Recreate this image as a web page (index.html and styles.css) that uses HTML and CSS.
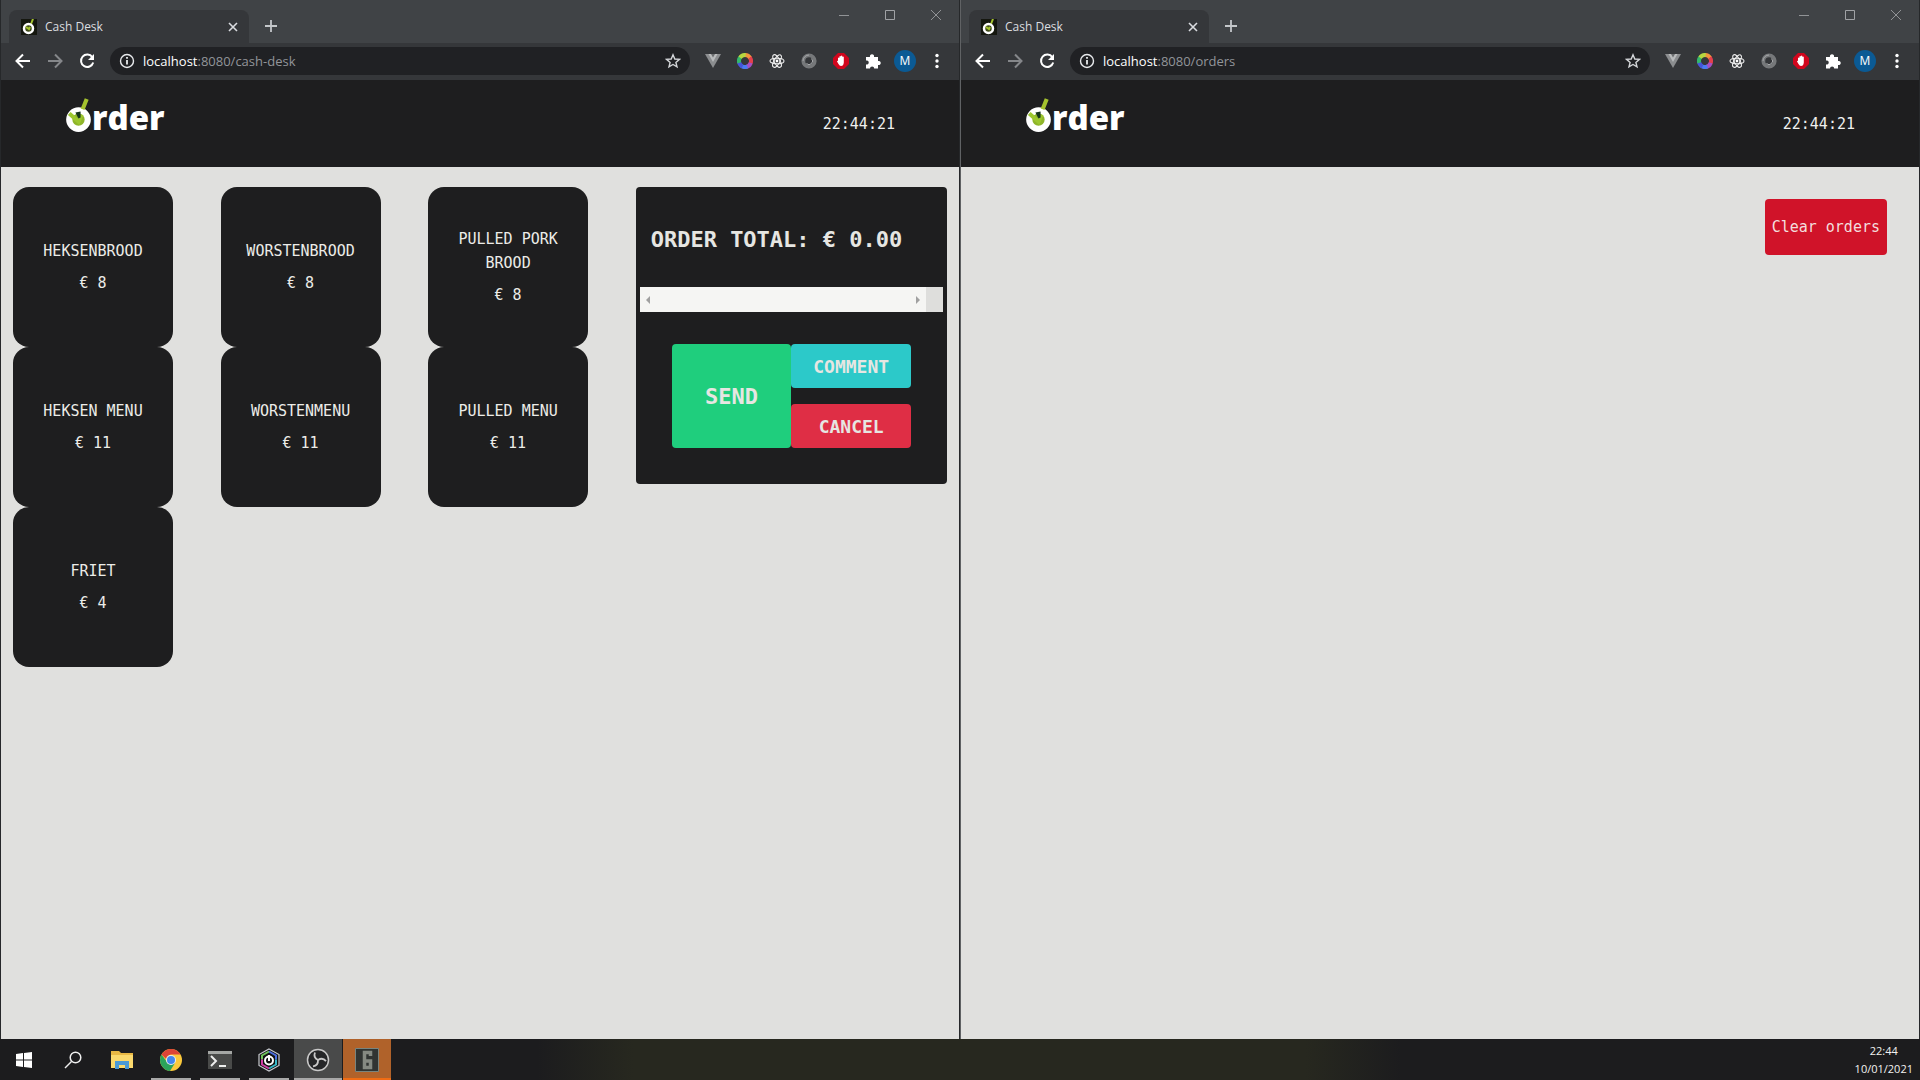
FILE: index.html
```html
<!DOCTYPE html>
<html lang="en">
<head>
<meta charset="utf-8">
<title>Cash Desk</title>
<link rel="stylesheet" href="styles.css">
</head>
<body>
<svg class="sprite" aria-hidden="true">
  <symbol id="favicon" viewBox="0 0 16 16"><rect width="16" height="16" fill="#15170f"/><path d="M10 5 12 0" stroke="#a4c22e" stroke-width="2"/><circle cx="7.500" cy="9.500" r="4.500" fill="#3f4a1c" stroke="#fff" stroke-width="2.500"/><path d="M5 8l3 2 1-2" stroke="#a4c22e" stroke-width="2" fill="none"/></symbol>
  <symbol id="close" viewBox="0 0 16 16"><path d="M4 4l8 8M12 4l-8 8" stroke="#dadce0" stroke-width="1.600"/></symbol>
  <symbol id="plus" viewBox="0 0 16 16"><path d="M8 2v12M2 8h12" stroke="#c4c7ca" stroke-width="1.800"/></symbol>
  <symbol id="win-min" viewBox="0 0 12 12"><path d="M1 6.500h10" stroke="#919396"/></symbol>
  <symbol id="win-max" viewBox="0 0 12 12"><path d="M1.500 1.500h9v9h-9z" stroke="#a0a2a5" fill="none"/></symbol>
  <symbol id="win-close" viewBox="0 0 12 12"><path d="M1 1l10 10M11 1L1 11" stroke="#919396"/></symbol>
  <symbol id="back" viewBox="0 0 16 16"><path d="M15 8H2M8 1.500L1.500 8 8 14.500" stroke="currentColor" stroke-width="2" fill="none"/></symbol>
  <symbol id="reload" viewBox="0 0 16 16"><path d="M13.300 4.200A6.200 6.200 0 1 0 14.200 9.500" stroke="#fff" stroke-width="2" fill="none"/><path d="M15 1v6H9z" fill="#fff"/></symbol>
  <symbol id="info" viewBox="0 0 16 16"><circle cx="8" cy="8" r="6.500" stroke="#e8eaed" stroke-width="1.400" fill="none"/><path d="M8 7v4.500M8 4v1.800" stroke="#e8eaed" stroke-width="1.800"/></symbol>
  <symbol id="star" viewBox="0 0 16 16"><path d="M8 1.800l1.800 4.200 4.600.4-3.500 3 1.100 4.500L8 11.500l-4 2.400 1.100-4.500-3.500-3 4.600-.4z" stroke="#d4d6d9" stroke-width="1.400" fill="none"/></symbol>
  <symbol id="vue" viewBox="0 0 16 16"><path d="M0 1h16L8 15z" fill="#8b8d8f"/><path d="M3.500 1h9L8 9z" fill="#b9bbbc"/><path d="M6 1h4L8 4.500z" fill="#6c6e70"/></symbol>
  <symbol id="wheel" viewBox="0 0 16 16"><g fill="none" stroke-width="4" stroke-dasharray="6.280 31.400"><g transform="rotate(-90 8 8)"><circle cx="8" cy="8" r="6" stroke="#f2953c"/></g><g transform="rotate(-36 8 8)"><circle cx="8" cy="8" r="6" stroke="#e3404d"/></g><g transform="rotate(18 8 8)"><circle cx="8" cy="8" r="6" stroke="#a54fc4"/></g><g transform="rotate(66 8 8)"><circle cx="8" cy="8" r="6" stroke="#4b7bf2"/></g><g transform="rotate(114 8 8)"><circle cx="8" cy="8" r="6" stroke="#4655d8"/></g><g transform="rotate(162 8 8)"><circle cx="8" cy="8" r="6" stroke="#34b86b"/></g><g transform="rotate(214 8 8)"><circle cx="8" cy="8" r="6" stroke="#b6d63f"/></g></g></symbol>
  <symbol id="react" viewBox="0 0 16 16"><g fill="none" stroke="#eee" stroke-width="1.100"><ellipse cx="8" cy="8" rx="7" ry="2.800"/><ellipse cx="8" cy="8" rx="7" ry="2.800" transform="rotate(60 8 8)"/><ellipse cx="8" cy="8" rx="7" ry="2.800" transform="rotate(120 8 8)"/></g><circle cx="8" cy="8" r="1.400" fill="#fff"/></symbol>
  <symbol id="ring" viewBox="0 0 16 16"><circle cx="8" cy="8" r="5.700" fill="none" stroke="#76787a" stroke-width="3.800"/><path d="M10.500 5.500a3.500 3.500 0 0 1-5 5M2 8a6 6 0 0 1 6-6" stroke="#a5a7a9" fill="none"/></symbol>
  <symbol id="block" viewBox="0 0 16 16"><path d="M5 0h6l5 5v6l-5 5H5l-5-5V5z" fill="#d1061d"/><path d="M5 8V5q.8-1 1.400 0V3.500q.8-1 1.500 0V3q.8-1 1.500 0v1q.8-1 1.400 0V9.500Q10.500 13 8 13 6.500 13 5.500 11L4 8.500q.2-1 1-.5z" fill="#fff"/></symbol>
  <symbol id="puzzle" viewBox="0 0 16 16"><path d="M1 4h4a2.100 2.100 0 1 1 4 0h4v4a2.100 2.100 0 1 1 0 4v3.500H9.200a2.100 2.100 0 1 0-4.200 0H1v-4a2.100 2.100 0 1 0 0-4z" fill="#fff"/></symbol>
  <symbol id="dots" viewBox="0 0 16 16"><g fill="#fff"><circle cx="8" cy="2.500" r="1.700"/><circle cx="8" cy="8" r="1.700"/><circle cx="8" cy="13.500" r="1.700"/></g></symbol>
  <symbol id="logo-mark" viewBox="0 0 24 34"><circle cx="12" cy="21" r="9" fill="#8fb52b" stroke="#fff" stroke-width="6"/><path d="M16 11L20 1" stroke="#a4c22e" stroke-width="4"/><path d="M3 15l9 8 3-7" stroke="#9cc62f" stroke-width="4" fill="none"/><path d="M9 14l5-1v6l-2 1z" fill="#14341c"/></symbol>
</svg>

<div class="desktop">
  <div class="windows">
    <section class="window">
      <div class="tab-strip">
        <div class="tab"><svg class="icon"><use href="#favicon"/></svg><span class="tab-title">Cash Desk</span><button class="plain" aria-label="Close tab"><svg class="icon"><use href="#close"/></svg></button></div>
        <button class="plain new-tab" aria-label="New tab"><svg class="icon"><use href="#plus"/></svg></button>
        <div class="window-controls">
          <button class="plain" aria-label="Minimize"><svg><use href="#win-min"/></svg></button>
          <button class="plain" aria-label="Maximize"><svg><use href="#win-max"/></svg></button>
          <button class="plain" aria-label="Close"><svg><use href="#win-close"/></svg></button>
        </div>
      </div>
      <div class="toolbar">
        <div class="nav">
          <button class="plain" aria-label="Back"><svg class="icon"><use href="#back"/></svg></button>
          <button class="plain forward" aria-label="Forward"><svg class="icon"><use href="#back"/></svg></button>
          <button class="plain" aria-label="Reload"><svg class="icon"><use href="#reload"/></svg></button>
        </div>
        <div class="address"><svg class="icon"><use href="#info"/></svg><a class="url" href="#"><b>localhost</b>:8080/cash-desk</a><button class="plain" aria-label="Bookmark"><svg class="icon"><use href="#star"/></svg></button></div>
        <div class="extensions">
          <svg class="icon"><use href="#vue"/></svg><svg class="icon"><use href="#wheel"/></svg><svg class="icon"><use href="#react"/></svg><svg class="icon"><use href="#ring"/></svg><svg class="icon"><use href="#block"/></svg><svg class="icon"><use href="#puzzle"/></svg>
        </div>
        <button class="avatar">M</button>
        <button class="plain" aria-label="Menu"><svg class="icon"><use href="#dots"/></svg></button>
      </div>
      <header class="app-header">
        <a class="logo" href="#" aria-label="Order"><svg><use href="#logo-mark"/></svg><span>rder</span></a>
        <time>22:44:21</time>
      </header>
      <main class="page cash-desk">
        <div class="products">
          <button class="product"><span>HEKSENBROOD</span><span>€ 8</span></button>
          <button class="product"><span>WORSTENBROOD</span><span>€ 8</span></button>
          <button class="product"><span>PULLED PORK BROOD</span><span>€ 8</span></button>
          <button class="product"><span>HEKSEN MENU</span><span>€ 11</span></button>
          <button class="product"><span>WORSTENMENU</span><span>€ 11</span></button>
          <button class="product"><span>PULLED MENU</span><span>€ 11</span></button>
          <button class="product"><span>FRIET</span><span>€ 4</span></button>
        </div>
        <aside class="order">
          <h1>ORDER TOTAL: € 0.00</h1>
          <div class="order-list"><div class="track"><i class="arrow left"></i><i class="arrow right"></i></div><div class="corner"></div></div>
          <div class="actions">
            <button class="send">SEND</button>
            <button class="comment">COMMENT</button>
            <button class="cancel">CANCEL</button>
          </div>
        </aside>
      </main>
    </section>

    <section class="window">
      <div class="tab-strip">
        <div class="tab"><svg class="icon"><use href="#favicon"/></svg><span class="tab-title">Cash Desk</span><button class="plain" aria-label="Close tab"><svg class="icon"><use href="#close"/></svg></button></div>
        <button class="plain new-tab" aria-label="New tab"><svg class="icon"><use href="#plus"/></svg></button>
        <div class="window-controls">
          <button class="plain" aria-label="Minimize"><svg><use href="#win-min"/></svg></button>
          <button class="plain" aria-label="Maximize"><svg><use href="#win-max"/></svg></button>
          <button class="plain" aria-label="Close"><svg><use href="#win-close"/></svg></button>
        </div>
      </div>
      <div class="toolbar">
        <div class="nav">
          <button class="plain" aria-label="Back"><svg class="icon"><use href="#back"/></svg></button>
          <button class="plain forward" aria-label="Forward"><svg class="icon"><use href="#back"/></svg></button>
          <button class="plain" aria-label="Reload"><svg class="icon"><use href="#reload"/></svg></button>
        </div>
        <div class="address"><svg class="icon"><use href="#info"/></svg><a class="url" href="#"><b>localhost</b>:8080/orders</a><button class="plain" aria-label="Bookmark"><svg class="icon"><use href="#star"/></svg></button></div>
        <div class="extensions">
          <svg class="icon"><use href="#vue"/></svg><svg class="icon"><use href="#wheel"/></svg><svg class="icon"><use href="#react"/></svg><svg class="icon"><use href="#ring"/></svg><svg class="icon"><use href="#block"/></svg><svg class="icon"><use href="#puzzle"/></svg>
        </div>
        <button class="avatar">M</button>
        <button class="plain" aria-label="Menu"><svg class="icon"><use href="#dots"/></svg></button>
      </div>
      <header class="app-header">
        <a class="logo" href="#" aria-label="Order"><svg><use href="#logo-mark"/></svg><span>rder</span></a>
        <time>22:44:21</time>
      </header>
      <main class="page orders">
        <button class="clear">Clear orders</button>
      </main>
    </section>
  </div>

  <nav class="taskbar" aria-label="Taskbar">
    <button class="task" aria-label="Start"><svg viewBox="0 0 24 24"><path d="M4 6l7-1v6.500H4zM12 5l8-1v7.500h-8zM4 12.500h7V19l-7-1zM12 12.500h8V20l-8-1z" fill="#fff"/></svg></button>
    <button class="task" aria-label="Search"><svg viewBox="0 0 24 24"><circle cx="14.500" cy="9.500" r="5.300" fill="none" stroke="#eee" stroke-width="1.500"/><path d="M10.500 13.500L4 20" stroke="#eee" stroke-width="1.500"/></svg></button>
    <button class="task" aria-label="File Explorer"><svg viewBox="0 0 24 24"><path d="M1 3h8l2 2h12v15H1z" fill="#e9b844"/><path d="M1 7h22v13H1z" fill="#fbd96d"/><path d="M5 21v-8h14v8h-4v-4H9v4z" fill="#4a9ad6"/></svg></button>
    <button class="task running" aria-label="Chrome"><svg viewBox="0 0 24 24"><circle cx="12" cy="12" r="11" fill="#fbc93c"/><path d="M12 12L8 14 2.500 6.500A11 11 0 0 0 11 23l5-8z" fill="#2ba35b"/><path d="M2.500 6.500A11 11 0 0 1 21.500 6.500H12Q8 7 7.200 11z" fill="#dd4437"/><circle cx="12" cy="12" r="5" fill="#eee"/><circle cx="12" cy="12" r="4" fill="#4487ed"/></svg></button>
    <button class="task running" aria-label="Terminal"><svg viewBox="0 0 24 24"><path d="M0 3h24v18H0z" fill="#494a49"/><path d="M0 3h24v3H0z" fill="#a5a7a5"/><path d="M3 8l5 5-5 5" stroke="#eee" stroke-width="2" fill="none"/><path d="M11 18h7" stroke="#eee" stroke-width="2"/></svg></button>
    <button class="task running" aria-label="Power tool"><svg viewBox="0 0 24 24"><path d="M12 1l10 5.500v11L12 23 2 17.500v-11z" fill="#111" stroke="#c8cad0" stroke-width="1.200"/><g fill="none" stroke-width="2"><path d="M12 3.500L5 7.500v4" stroke="#70c55a"/><path d="M12 3.500l7 4v4" stroke="#4b6de0"/><path d="M19 11.500v5l-7 4" stroke="#38b8c8"/><path d="M5 11.500v5l7 4" stroke="#cf3fa5"/></g><circle cx="12" cy="12.500" r="4" stroke="#fff" stroke-width="2" fill="#111"/><path d="M12 7v6" stroke="#fff" stroke-width="2"/></svg></button>
    <button class="task running active" aria-label="OBS Studio"><svg viewBox="0 0 24 24"><circle cx="12" cy="12" r="10.500" fill="#252628" stroke="#c8c8c8" stroke-width="1.500"/><g fill="none" stroke="#c8c8c8" stroke-width="1.800"><path d="M12 12Q7 9.500 9 4.500"/><path d="M12 12Q7 9.500 9 4.500" transform="rotate(120 12 12)"/><path d="M12 12Q7 9.500 9 4.500" transform="rotate(240 12 12)"/></g></svg></button>
    <button class="task running active alert" aria-label="Rainbow Six"><svg viewBox="0 0 24 24"><path d="M.5.500h23v23H.5z" fill="#303432" stroke="#78847e"/><path d="M15.500 8V4.500h-6v15h6V13h-5" stroke="#858a82" stroke-width="3.500" fill="none"/></svg></button>
    <div class="clock"><time>22:44</time><time>10/01/2021</time></div>
  </nav>
</div>
</body>
</html>
```
FILE: styles.css
```css
* { box-sizing: border-box; }
body { margin: 0; font-family: "Open Sans", "Noto Sans", sans-serif; background: #202020; }
button { border: 0; padding: 0; margin: 0; font: inherit; color: inherit; cursor: pointer; }
a { color: inherit; text-decoration: none; }
svg { display: block; }
.sprite { display: none; }
.plain { background: none; }
.icon { width: 16px; height: 16px; flex: none; }

.desktop { min-height: 100vh; display: flex; flex-direction: column; }
.windows { flex: 1; display: grid; grid-template-columns: 1fr 1fr; }
.window { display: flex; flex-direction: column; min-width: 0; border: solid #26282a; border-width: 0 1px; }
.window + .window { border-left-color: #606264; }

.tab-strip { height: 43px; display: flex; align-items: flex-start; padding-left: 8px; background: #404346; }
.tab { width: 240px; height: 33px; margin-top: 10px; padding: 0 8px 0 12px; display: flex; align-items: center; gap: 8px; background: #35373a; border-radius: 8px 8px 0 0; color: #dcdee0; font-size: 12px; }
.tab-title { flex: 1; }
.new-tab { margin: 18px 0 0 14px; }
.window-controls { margin-left: auto; display: flex; }
.window-controls .plain { width: 46px; height: 30px; display: grid; place-items: center; }
.window-controls svg { width: 12px; height: 12px; }

.toolbar { height: 37px; display: flex; align-items: center; padding: 0 14px 2px 14px; background: #35373a; color: #fff; }
.nav { display: flex; gap: 16px; }
.forward { color: #85878a; }
.forward svg { transform: rotate(180deg); }
.address { flex: 1; height: 28px; margin-left: 15px; padding: 0 9px; display: flex; align-items: center; gap: 8px; border-radius: 14px; background: #202124; }
.url { flex: 1; font-size: 13px; color: #92959a; }
.url b { font-weight: 400; color: #fff; }
.extensions { display: flex; gap: 16px; margin: 0 13px 0 15px; }
.avatar { width: 22px; height: 22px; margin-right: 13px; border-radius: 50%; background: #0b5a94; color: #fff; font-size: 12px; }

.app-header { height: 87px; padding: 0 64px; display: flex; align-items: center; justify-content: space-between; background: #1e1e1f; color: #f0f0ee; font-family: "DejaVu Sans Mono", monospace; font-size: 15px; }
.logo { display: flex; align-items: flex-start; gap: 1px; padding: 0 0 12px 1px; font-family: "Open Sans", sans-serif; font-size: 33px; line-height: 40px; font-weight: 800; color: #fff; }
.logo svg { width: 25px; height: 35px; }

.page { flex: 1; background: #e0e0de; font-family: "DejaVu Sans Mono", monospace; font-size: 15px; }
.cash-desk { display: grid; grid-template-columns: minmax(0, 2fr) minmax(0, 1fr); align-items: start; padding: 20px 12px; }
.products { display: grid; grid-template-columns: repeat(3, 1fr); justify-items: start; }
.product { width: 160px; height: 160px; padding: 0 20px; display: flex; flex-direction: column; align-items: center; justify-content: center; gap: 8px; border-radius: 16px; background: #1e1e1f; color: #ecece8; line-height: 24px; }
.order { padding: 0 4px 36px; border-radius: 4px; background: #1e1e1f; color: #e6e6e2; }
.order h1 { margin: 0; padding: 37px 0 31px 11px; font-size: 22px; line-height: 32px; white-space: nowrap; }
.order-list { display: flex; height: 25px; background: #f5f5f3; }
.track { flex: 1; display: flex; align-items: center; justify-content: space-between; padding: 0 6px; }
.arrow { border: 4px solid transparent; }
.arrow.left { border-left-width: 0; border-right-color: #a0a0a0; }
.arrow.right { border-right-width: 0; border-left-color: #a0a0a0; }
.corner { width: 17px; background: #dededc; }
.actions { display: grid; grid-template-columns: 1fr 1fr; grid-template-rows: 44px 44px; row-gap: 16px; margin: 32px 32px 0; font-weight: 700; font-size: 18px; }
.actions button { border-radius: 4px; }
.actions .send { grid-row: span 2; background: #1fce7d; font-size: 22px; }
.comment { background: #2cc9c9; }
.cancel { background: #df2e45; }
.orders { display: flex; align-items: flex-start; justify-content: flex-end; padding: 32px; }
.clear { height: 56px; padding: 0 7px; border-radius: 4px; background: #d01329; color: #f3dedd; }

.taskbar { height: 41px; display: flex; gap: 1px; background: linear-gradient(90deg, #1c1c1e 28%, #27281f 33%, #27281f 68%, #1c1c1e 73%); color: #f2f2f0; }
.task { width: 48px; display: grid; place-items: center; background: none; }
.task svg { width: 24px; height: 24px; }
.running { background: linear-gradient(#a8a8a8, #a8a8a8) bottom / 40px 2px no-repeat; }
.active { background-color: #494a4a; background-size: 100% 2px; }
.alert { background-color: #b0622a; background-image: linear-gradient(#f06c14, #f06c14); }
.clock { margin-left: auto; padding: 3px 7px 0 0; display: flex; flex-direction: column; align-items: center; font-size: 11px; line-height: 18px; }
```
